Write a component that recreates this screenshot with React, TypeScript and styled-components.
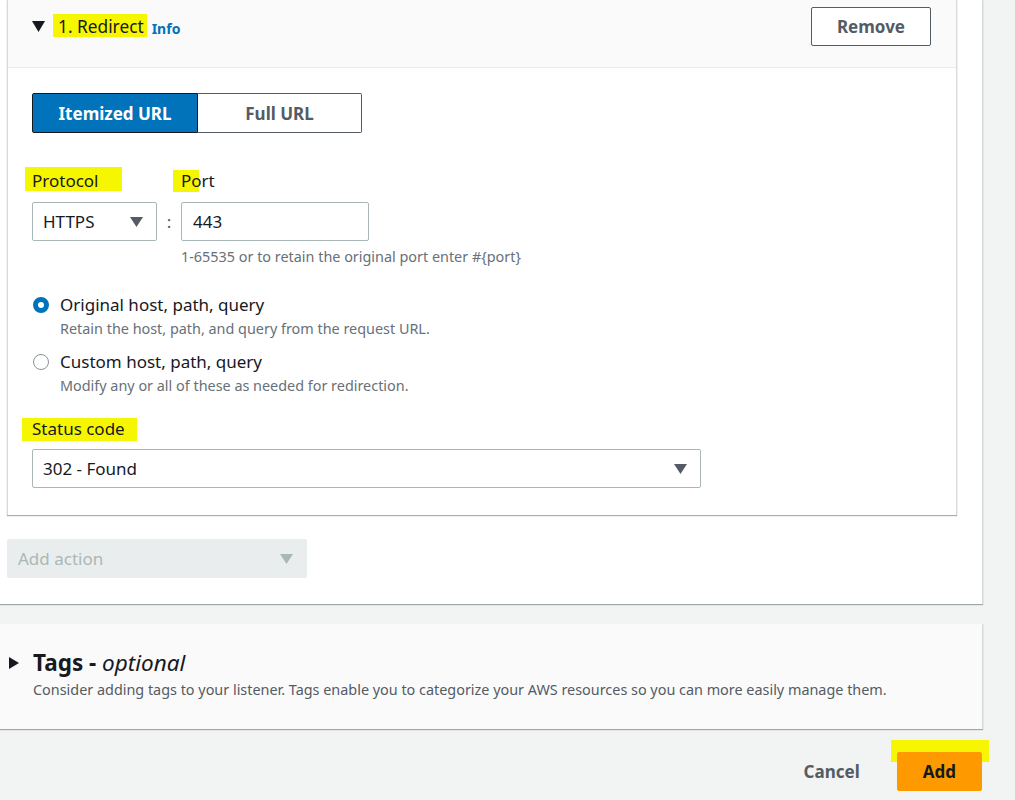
import React, { useState } from 'react';
import styled, { createGlobalStyle } from 'styled-components';

const GlobalStyle = createGlobalStyle`
  html, body {
    margin: 0;
    padding: 0;
    background: #f2f3f3;
    font-family: "Noto Sans", "Open Sans", sans-serif;
    color: #16191f;
  }
`;

const Page = styled.div`
  width: 1015px;
  height: 800px;
  overflow: hidden;
`;

const OuterCard = styled.div`
  width: 975px;
  padding: 0 0 26px 7px;
  background: #fff;
  border-right: 1px solid #d5dbdb;
  box-shadow: 0 1px 1px 0 rgba(0, 28, 36, 0.35);
`;

const RuleCard = styled.div`
  width: 948px;
  background: #fff;
  border-left: 1px solid #d5dbdb;
  border-right: 1px solid #d5dbdb;
  box-shadow: 0 1px 1px 0 rgba(0, 28, 36, 0.35);
`;

const RuleHeader = styled.div`
  height: 60px;
  padding: 7px 25px 0 24px;
  display: flex;
  justify-content: space-between;
  align-items: flex-start;
  background: #fafafa;
  border-bottom: 1px solid #eaeded;
`;

const TitleRow = styled.div`
  height: 39px;
  display: flex;
  align-items: center;
`;

// yellow annotation marker painted behind a piece of text
const Mark = styled.span<{ $l: number; $t: number; $w: number; $h: number }>`
  position: absolute;
  left: ${(p) => p.$l}px;
  top: ${(p) => p.$t}px;
  width: ${(p) => p.$w}px;
  height: ${(p) => p.$h}px;
  background: #f6f600;
  z-index: 0;
`;

const Marked = styled.span`
  position: relative;
  display: inline-block;
`;

const MarkText = styled.span`
  position: relative;
  z-index: 1;
  display: inline-block;
`;

const RuleTitle = styled.span`
  margin-left: 13px;
  font-size: 17.3px;
  line-height: 22px;
  color: #16191f;
`;

const InfoLink = styled.a`
  font-size: 14px;
  font-weight: 700;
  color: #0073bb;
  margin-top: 4px;
  margin-left: 8px;
`;

const Button = styled.button<{ $primary?: boolean }>`
  height: 39px;
  padding: 0 25px;
  font-family: inherit;
  font-size: 17px;
  font-weight: 700;
  border-radius: 2px;
  cursor: pointer;
  color: ${(p) => (p.$primary ? '#16191f' : '#545b64')};
  background: ${(p) => (p.$primary ? '#ff9900' : '#fff')};
  border: 1px solid ${(p) => (p.$primary ? '#ff9900' : '#545b64')};
`;

const RuleBody = styled.div`
  padding: 25px 25px 27px 24px;
`;

const Segmented = styled.div`
  display: flex;
  width: 330px;
  height: 40px;
`;

const Segment = styled.button<{ $active?: boolean }>`
  flex: ${(p) => (p.$active ? '0 0 166px' : '1')};
  font-family: inherit;
  font-size: 17px;
  font-weight: 700;
  border-radius: ${(p) => (p.$active ? '2px 0 0 2px' : '0 2px 2px 0')};
  border: 1px solid ${(p) => (p.$active ? '#16191f' : '#545b64')};
  border-left-width: ${(p) => (p.$active ? '1px' : '0')};
  background: ${(p) => (p.$active ? '#0073bb' : '#fff')};
  color: ${(p) => (p.$active ? '#fff' : '#545b64')};
`;

const FieldRow = styled.div`
  display: flex;
  align-items: flex-start;
  margin-top: 37px;
`;

const Field = styled.div<{ $w?: number }>`
  display: flex;
  flex-direction: column;
  width: ${(p) => (p.$w ? `${p.$w}px` : 'auto')};
`;

const Label = styled.div<{ $gap?: number }>`
  font-size: 17px;
  line-height: 22px;
  height: 22px;
  margin-bottom: ${(p) => p.$gap ?? 10}px;
`;

const Select = styled.div<{ $w: number; $disabled?: boolean }>`
  width: ${(p) => p.$w}px;
  height: 39px;
  box-sizing: border-box;
  display: flex;
  align-items: center;
  justify-content: space-between;
  padding: 0 13px 0 10px;
  font-size: 17px;
  border-radius: 2px;
  border: 1px solid ${(p) => (p.$disabled ? '#eaeded' : '#aab7b8')};
  background: ${(p) => (p.$disabled ? '#eaeded' : '#fff')};
  color: ${(p) => (p.$disabled ? '#aab7b8' : '#16191f')};
`;

const Caret = styled.svg`
  width: 13px;
  height: 10px;
`;

const Colon = styled.div`
  width: 24px;
  margin-top: 32px;
  height: 39px;
  display: flex;
  align-items: center;
  justify-content: center;
  font-size: 17px;
  color: #545b64;
`;

const Input = styled.input`
  width: 188px;
  height: 39px;
  box-sizing: border-box;
  padding: 0 11px;
  font-family: inherit;
  font-size: 17px;
  color: #16191f;
  border: 1px solid #aab7b8;
  border-radius: 2px;
  outline: none;
`;

const Hint = styled.div`
  margin-top: 7px;
  font-size: 14.4px;
  line-height: 18px;
  color: #687078;
  white-space: nowrap;
`;

const RadioGroup = styled.div`
  margin-top: 29px;
  display: flex;
  flex-direction: column;
  gap: 14px;
`;

const RadioItem = styled.label`
  display: grid;
  grid-template-columns: 28px 1fr;
  row-gap: 5px;
`;

const RadioDot = styled.span<{ $checked?: boolean }>`
  width: 16px;
  height: 16px;
  box-sizing: border-box;
  border-radius: 50%;
  margin-top: 2px;
  margin-left: 1px;
  background: #fff;
  border: ${(p) => (p.$checked ? '5px solid #0073bb' : '1.5px solid #879596')};
`;

const RadioLabel = styled.span`
  font-size: 17px;
  line-height: 20px;
`;

const RadioDesc = styled.span`
  grid-column: 2;
  font-size: 14.4px;
  line-height: 18px;
  color: #687078;
`;

const StatusField = styled(Field)`
  margin-top: 23px;
`;

const AddAction = styled.div`
  margin-top: 24px;
`;

const TagsCard = styled.div`
  margin-top: 20px;
  width: 983px;
  height: 105px;
  box-sizing: border-box;
  padding: 24px 0 0 9px;
  background: #fafafa;
  border-right: 1px solid #d5dbdb;
  box-shadow: 0 1px 1px 0 rgba(0, 28, 36, 0.35);
`;

const TagsTitle = styled.div`
  display: flex;
  align-items: center;
  gap: 14px;
  font-size: 22.5px;
  line-height: 30px;
  font-weight: 700;
  & i {
    font-weight: 400;
  }
`;

const TagsDesc = styled.div`
  margin: 3px 0 0 24px;
  font-size: 14.4px;
  line-height: 18px;
  color: #545b64;
`;

const Footer = styled.div`
  width: 982px;
  margin-top: 23px;
  display: flex;
  justify-content: flex-end;
  align-items: center;
  gap: 12px;
`;

const LinkButton = styled.button`
  height: 39px;
  padding: 0 25px;
  border: none;
  background: none;
  font-family: inherit;
  font-size: 17px;
  font-weight: 700;
  color: #545b64;
`;

const TriangleDown = ({ color = '#545b64' }: { color?: string }) => (
  <Caret viewBox="0 0 13 10">
    <path d="M0 0h13L6.5 10z" fill={color} />
  </Caret>
);

export default function App() {
  const [mode, setMode] = useState<'itemized' | 'full'>('itemized');
  const [port, setPort] = useState('443');

  return (
    <Page>
      <GlobalStyle />
      <OuterCard>
        <RuleCard>
          <RuleHeader>
            <TitleRow>
              <svg width="13" height="11" viewBox="0 0 13 11">
                <path d="M0 0h13L6.5 11z" fill="#16191f" />
              </svg>
              <Marked>
                <Mark $l={8} $t={-2} $w={94} $h={23} />
                <MarkText>
                  <RuleTitle>1. Redirect</RuleTitle>
                </MarkText>
              </Marked>
              <InfoLink>Info</InfoLink>
            </TitleRow>
            <Button>Remove</Button>
          </RuleHeader>
          <RuleBody>
            <Segmented>
              <Segment $active={mode === 'itemized'} onClick={() => setMode('itemized')}>
                Itemized URL
              </Segment>
              <Segment $active={mode === 'full'} onClick={() => setMode('full')}>
                Full URL
              </Segment>
            </Segmented>

            <FieldRow>
              <Field $w={125}>
                <Label>
                  <Marked>
                    <Mark $l={-7} $t={-3} $w={97} $h={24} />
                    <MarkText>Protocol</MarkText>
                  </Marked>
                </Label>
                <Select $w={125}>
                  HTTPS
                  <TriangleDown />
                </Select>
              </Field>
              <Colon>:</Colon>
              <Field>
                <Label>
                  <Marked>
                    <Mark $l={-8} $t={0} $w={26} $h={22} />
                    <MarkText>Port</MarkText>
                  </Marked>
                </Label>
                <Input value={port} onChange={(e) => setPort(e.target.value)} />
                <Hint>1-65535 or to retain the original port enter #{'{port}'}</Hint>
              </Field>
            </FieldRow>

            <RadioGroup>
              <RadioItem>
                <RadioDot $checked />
                <RadioLabel>Original host, path, query</RadioLabel>
                <RadioDesc>Retain the host, path, and query from the request URL.</RadioDesc>
              </RadioItem>
              <RadioItem>
                <RadioDot />
                <RadioLabel>Custom host, path, query</RadioLabel>
                <RadioDesc>Modify any or all of these as needed for redirection.</RadioDesc>
              </RadioItem>
            </RadioGroup>

            <StatusField>
              <Label $gap={9}>
                <Marked>
                  <Mark $l={-10} $t={0} $w={115} $h={23} />
                  <MarkText>Status code</MarkText>
                </Marked>
              </Label>
              <Select $w={669}>
                302 - Found
                <TriangleDown />
              </Select>
            </StatusField>
          </RuleBody>
        </RuleCard>

        <AddAction>
          <Select $w={300} $disabled>
            Add action
            <TriangleDown color="#aab7b8" />
          </Select>
        </AddAction>
      </OuterCard>

      <TagsCard>
        <TagsTitle>
          <svg width="10" height="12" viewBox="0 0 10 12">
            <path d="M0 0v12l10-6z" fill="#16191f" />
          </svg>
          <span>
            Tags - <i>optional</i>
          </span>
        </TagsTitle>
        <TagsDesc>
          Consider adding tags to your listener. Tags enable you to categorize your AWS resources so you can
          more easily manage them.
        </TagsDesc>
      </TagsCard>

      <Footer>
        <LinkButton>Cancel</LinkButton>
        <Marked>
          <Mark $l={-6} $t={-12} $w={98} $h={22} />
          <MarkText>
            <Button $primary>Add</Button>
          </MarkText>
        </Marked>
      </Footer>
    </Page>
  );
}
